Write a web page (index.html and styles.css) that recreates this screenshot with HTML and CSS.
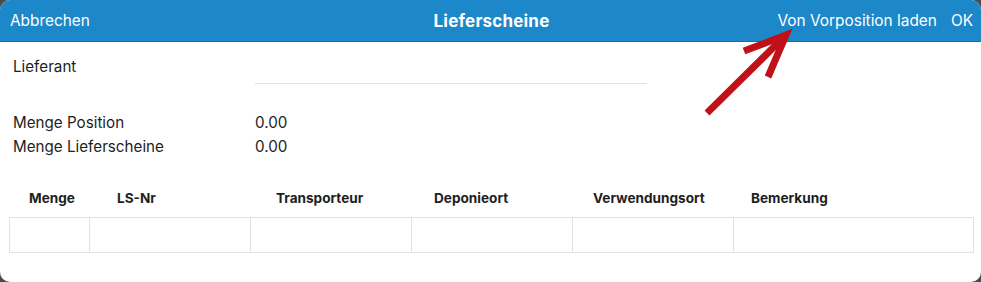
FILE: index.html
```html
<!DOCTYPE html>
<html>
<head lang="de">
    <meta charset="utf-8">
    <meta name="viewport" content="width=device-width, initial-scale=1">
    <title>Lieferscheine</title>
    <link rel="stylesheet" href="styles.css">
</head>
<body>
<div class="sheet">
    <header class="topbar">
        <span class="bar-left">Abbrechen</span>
        <span class="bar-title">Lieferscheine</span>
        <span class="bar-right">
            <span>Von Vorposition laden</span>
            <span>OK</span>
        </span>
    </header>

    <section class="form">
        <div class="field-row">
            <span class="label">Lieferant</span>
            <span class="input"></span>
        </div>

        <div class="sums">
            <span class="label">Menge Position</span>
            <span>0.00</span>
            <span class="label">Menge Lieferscheine</span>
            <span>0.00</span>
        </div>
    </section>

    <section class="table">
        <div class="thead">
            <span>Menge</span>
            <span>LS-Nr</span>
            <span>Transporteur</span>
            <span>Deponieort</span>
            <span>Verwendungsort</span>
            <span>Bemerkung</span>
        </div>
        <div class="trow">
            <span></span>
            <span></span>
            <span></span>
            <span></span>
            <span></span>
            <span></span>
        </div>
    </section>

    <svg class="arrow" width="981" height="282" viewBox="0 0 981 282">
        <path d="M707 113 L783 38" />
        <path d="M744 51 L786 35 L768 77" />
    </svg>
</div>
</body>
</html>
```

FILE: styles.css
```css
html, body {
    margin: 0;
    padding: 0;
    background: #4a4a4a;
}

body {
    font-family: Inter, "Noto Sans", sans-serif;
    color: #1e1e1e;
}

.sheet {
    position: relative;
    width: 981px;
    height: 282px;
    background: #fff;
    border-radius: 10px;
    overflow: hidden;
}

.topbar {
    display: grid;
    grid-template-columns: 1fr auto 1fr;
    align-items: center;
    height: 41px;
    padding: 0 8px 0 10px;
    background: #1c87c9;
    border-bottom: 1px solid #176ea6;
    color: #fff;
    font-size: 15.4px;
}

.bar-title {
    font-weight: 700;
    font-size: 17px;
    letter-spacing: 0.2px;
}

.bar-right {
    display: flex;
    justify-content: flex-end;
    gap: 14px;
}

.form {
    padding: 0 13px;
    font-size: 15.2px;
}

.field-row {
    display: grid;
    grid-template-columns: 242px 392px;
    margin-top: 13px;
}

.label {
    line-height: 24px;
}

.input {
    height: 28px;
    border-bottom: 1px solid #e3e3e3;
}

.sums {
    display: grid;
    grid-template-columns: 242px auto;
    margin-top: 27px;
    line-height: 24px;
}

.table {
    padding: 0 7px 0 9px;
}

.thead {
    display: grid;
    grid-template-columns: 88px 159px 158px 159px 158px auto;
    margin: 29px 0 0 20px;
    line-height: 20px;
    font-size: 13.6px;
    font-weight: 700;
}

.trow {
    display: grid;
    grid-template-columns: 79px 161px 161px 161px 161px auto;
    height: 34px;
    margin-top: 9px;
    border: 1px solid #e2e2e2;
}

.trow span + span {
    border-left: 1px solid #e2e2e2;
}

.arrow {
    position: absolute;
    left: 0;
    top: 0;
    pointer-events: none;
}

.arrow path {
    fill: none;
    stroke: #bf1117;
    stroke-width: 7;
}
```
